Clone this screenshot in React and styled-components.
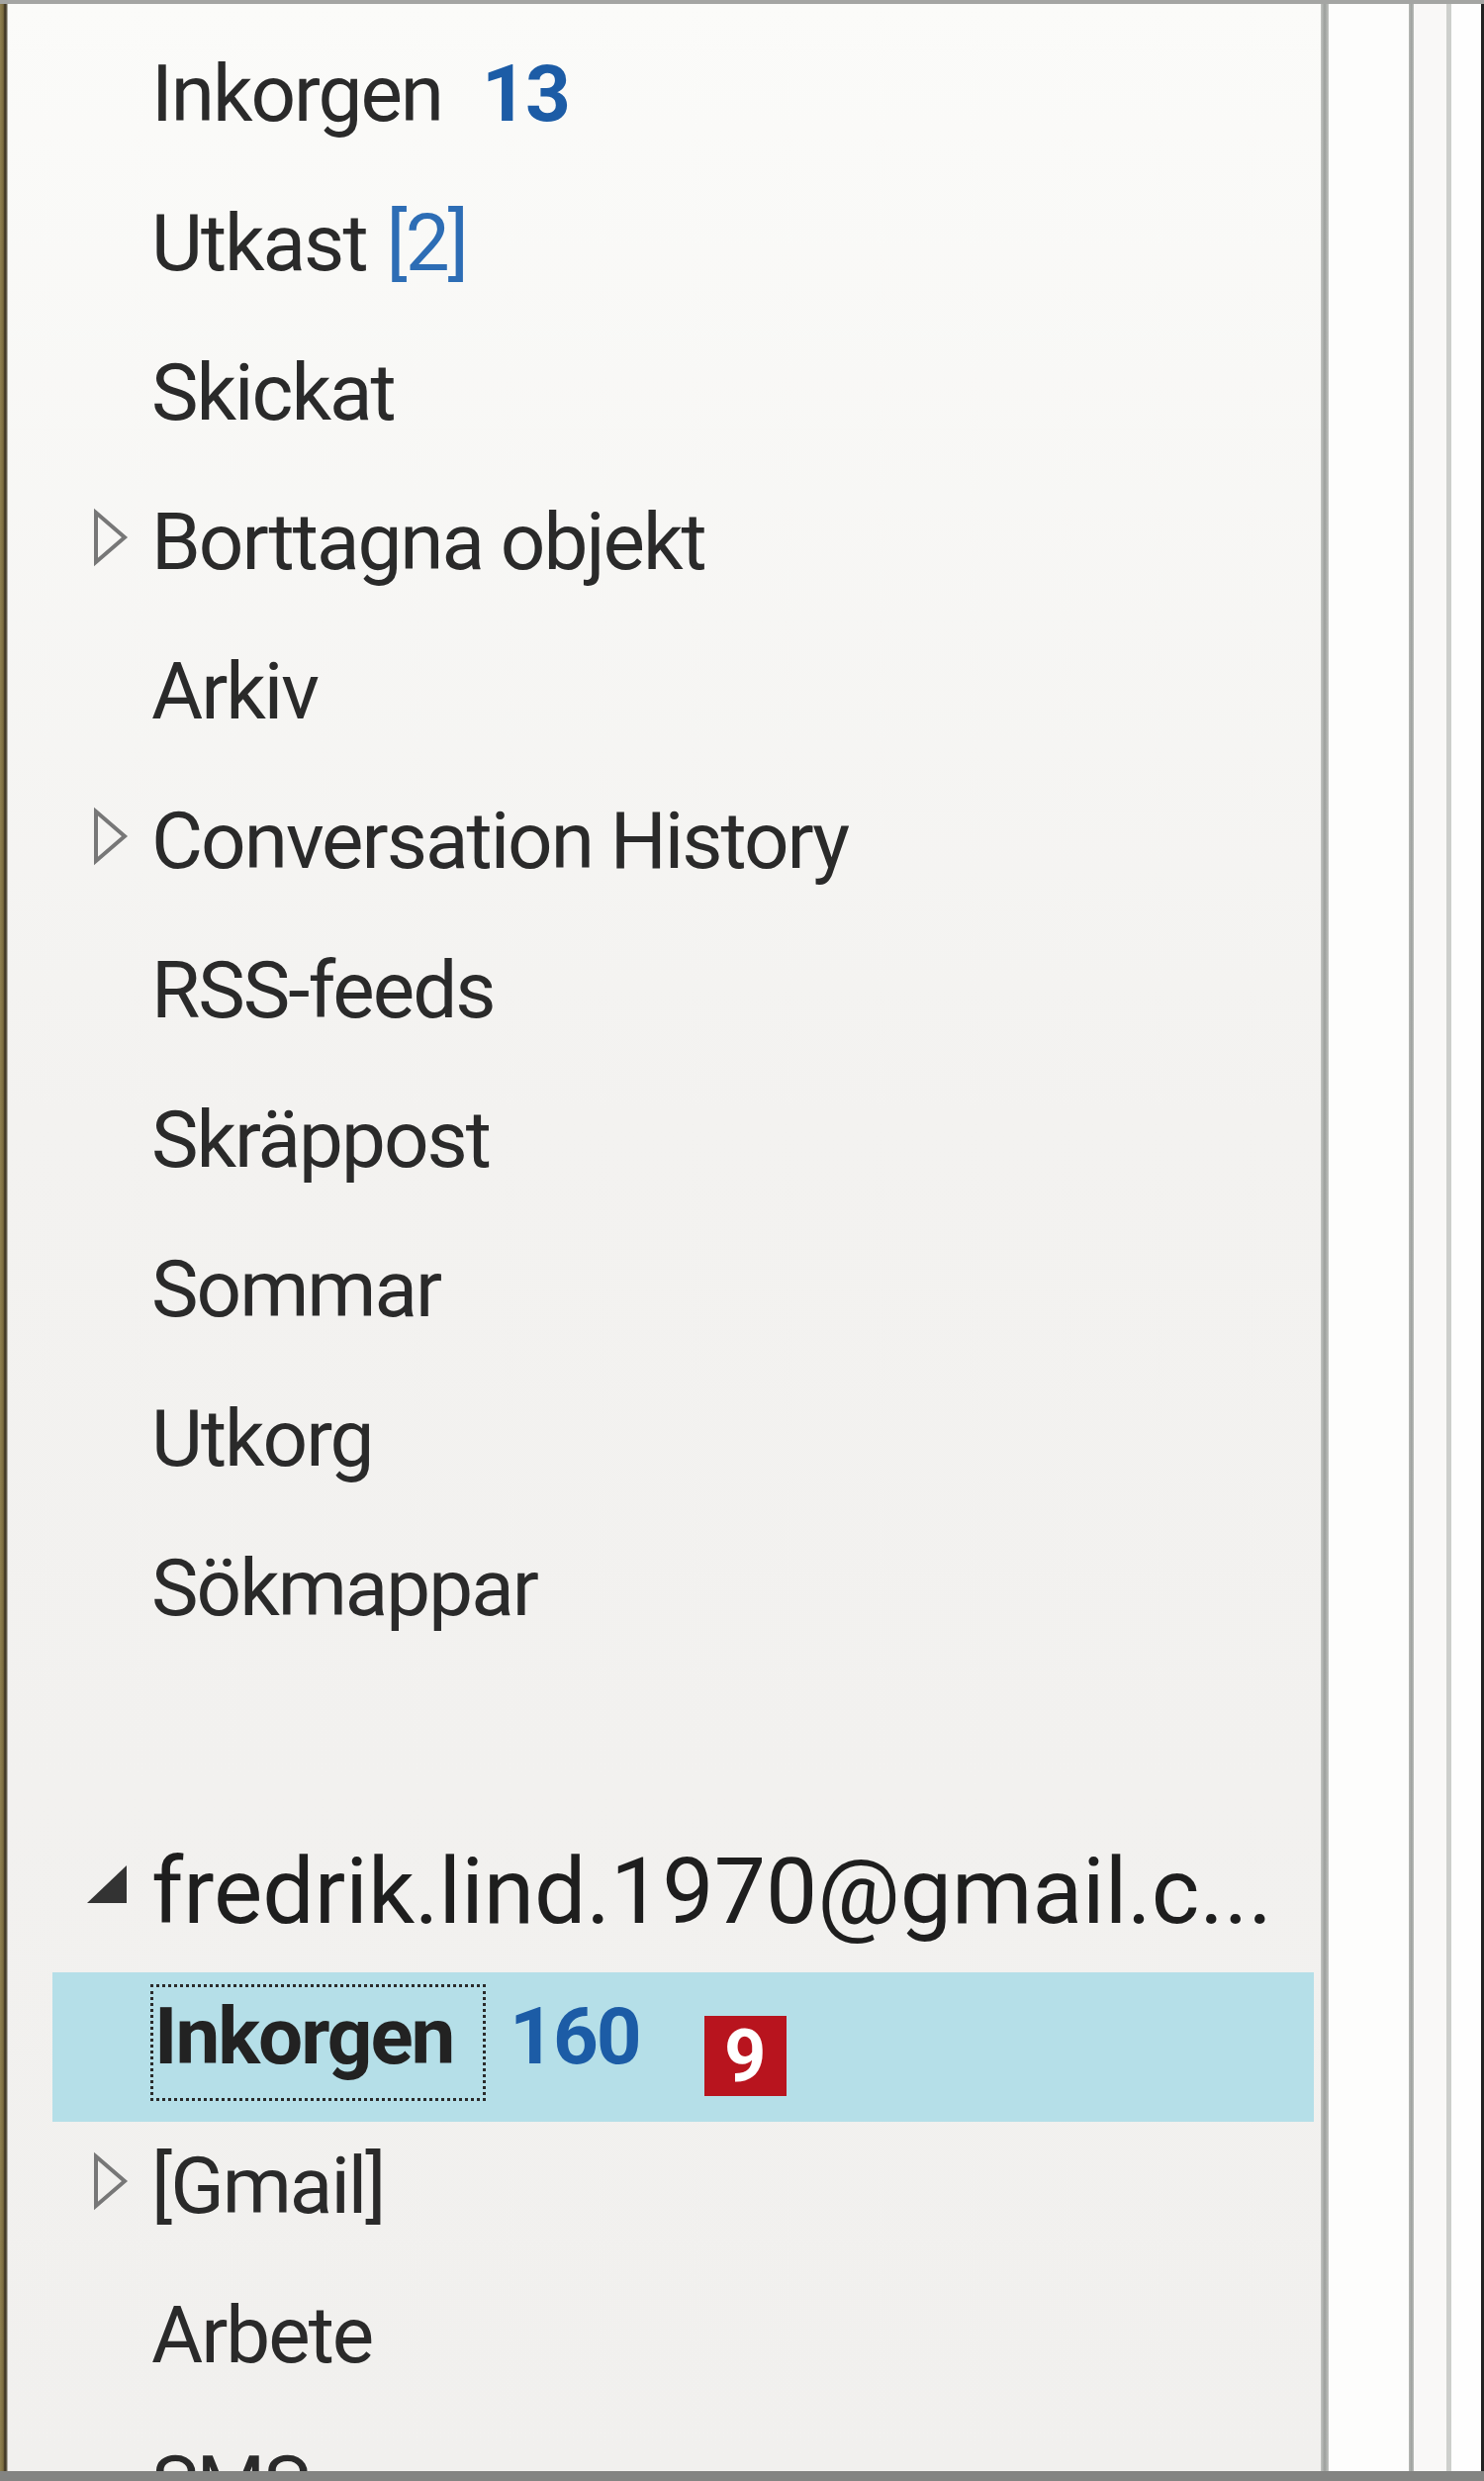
import React from 'react';
import styled, { createGlobalStyle } from 'styled-components';

const GlobalStyle = createGlobalStyle`
  html, body {
    margin: 0;
    padding: 0;
    background: #ffffff;
    overflow: hidden;
  }
  body {
    font-family: Roboto, "Liberation Sans", sans-serif;
  }
`;

const Frame = styled.div`
  width: 1500px;
  height: 2507px;
  display: flex;
  flex-direction: column;
  overflow: hidden;
`;

const TopRule = styled.div`
  height: 4px;
  flex: none;
  background: #a4a5a3;
`;

const Middle = styled.div`
  flex: 1;
  display: flex;
  min-height: 0;
`;

const BottomBar = styled.div`
  height: 10px;
  flex: none;
  background: #838482;
`;

const LeftEdge = styled.div`
  width: 8px;
  flex: none;
  background: linear-gradient(90deg, #8f8050 0%, #7a6b3f 40%, #3a3120 62%, #4e4634 78%, #d8d6d0 100%);
`;

const Pane = styled.div`
  flex: 1;
  min-width: 0;
  overflow: hidden;
  padding: 26px 7px 0 45px;
  background: linear-gradient(180deg, #fbfbf9 0%, #f3f2f0 45%, #f1f0ee 100%);
  display: flex;
  flex-direction: column;
`;

const Divider = styled.div`
  width: ${p => p.w}px;
  flex: none;
  background: ${p => p.color};
`;

const Strip = styled.div`
  width: ${p => p.w}px;
  flex: none;
  background: ${p => p.color};
`;

const Row = styled.div`
  height: 151px;
  flex: none;
  display: flex;
  align-items: center;
  box-sizing: border-box;
  padding: 0 0 22px 35px;
  background: ${p => (p.selected ? '#b5dfe8' : 'transparent')};
`;

const ArrowSlot = styled.div`
  width: 65px;
  height: 90px;
  flex: none;
`;

const Label = styled.span`
  font-size: 80px;
  line-height: 94px;
  letter-spacing: -2px;
  color: #2a2a2a;
  white-space: nowrap;
`;

const AccountLabel = styled.span`
  font-size: 93px;
  line-height: 109px;
  padding-top: 10px;
  color: #1e1e1e;
  white-space: nowrap;
`;

const FocusLabel = styled.span`
  align-self: flex-start;
  margin: 12px 0 0 -1px;
  padding: 3px 0 15px 1px;
  width: 339px;
  box-sizing: border-box;
  border: 3px dotted #2a2a2a;
  font-size: 80px;
  line-height: 94px;
  letter-spacing: -2px;
  font-weight: 700;
  color: #222;
  white-space: nowrap;
`;

const Count = styled.span`
  margin-left: ${p => p.gap}px;
  font-size: 80px;
  line-height: 94px;
  letter-spacing: -2px;
  font-weight: ${p => (p.bold ? 700 : 400)};
  color: ${p => (p.bold ? '#1c5ca6' : '#2d6db5')};
`;

const Badge = styled.span`
  align-self: flex-start;
  margin: 44px 0 0 65px;
  width: 83px;
  height: 81px;
  background: #b8141e;
  color: #ffffff;
  font-size: 74px;
  font-weight: 700;
  line-height: 81px;
  text-align: center;
`;

const OutlineArrow = () => (
  <svg width="65" height="90" viewBox="0 0 65 90">
    <path d="M9 15 L38 40 L9 65 Z" fill="none" stroke="#777" strokeWidth="4" strokeLinejoin="miter" />
  </svg>
);

const FilledArrow = () => (
  <svg width="65" height="90" viewBox="0 0 65 90">
    <path d="M40 23 L40 61 L0 61 Z" fill="#333" />
  </svg>
);

const folders = [
  { name: 'Inkorgen', count: '13', bold: true, gap: 40 },
  { name: 'Utkast', count: '[2]', gap: 20 },
  { name: 'Skickat' },
  { name: 'Borttagna objekt', arrow: true },
  { name: 'Arkiv' },
  { name: 'Conversation History', arrow: true },
  { name: 'RSS-feeds' },
  { name: 'Skräppost' },
  { name: 'Sommar' },
  { name: 'Utkorg' },
  { name: 'Sökmappar' },
];

const gmailFolders = [
  { name: '[Gmail]', arrow: true },
  { name: 'Arbete' },
  { name: 'SMS' },
];

const FolderRow = ({ folder }) => (
  <Row>
    <ArrowSlot>{folder.arrow && <OutlineArrow />}</ArrowSlot>
    <Label>{folder.name}</Label>
    {folder.count && (
      <Count gap={folder.gap} bold={folder.bold}>
        {folder.count}
      </Count>
    )}
  </Row>
);

const App = () => (
  <Frame>
    <GlobalStyle />
    <TopRule />
    <Middle>
      <LeftEdge />
      <Pane>
        {folders.map(f => (
          <FolderRow key={f.name} folder={f} />
        ))}
        <Row />
        <Row>
          <ArrowSlot>
            <FilledArrow />
          </ArrowSlot>
          <AccountLabel>fredrik.lind.1970@gmail.c...</AccountLabel>
        </Row>
        <Row selected>
          <ArrowSlot />
          <FocusLabel>Inkorgen</FocusLabel>
          <Count gap={24} bold>
            160
          </Count>
          <Badge>9</Badge>
        </Row>
        {gmailFolders.map(f => (
          <FolderRow key={f.name} folder={f} />
        ))}
      </Pane>
      <Divider w={8} color="linear-gradient(90deg, #c2c4c1, #9c9f9c 50%, #c2c4c1)" />
      <Strip w={81} color="#fdfdfc" />
      <Divider w={5} color="linear-gradient(90deg, #b8bab7, #a0a3a0 50%, #b8bab7)" />
      <Strip w={33} color="#f9f8f7" />
      <Divider w={5} color="#cdcfcc" />
      <Strip w={30} color="#fefefe" />
      <Divider w={3} color="#222" />
    </Middle>
    <BottomBar />
  </Frame>
);

export default App;
